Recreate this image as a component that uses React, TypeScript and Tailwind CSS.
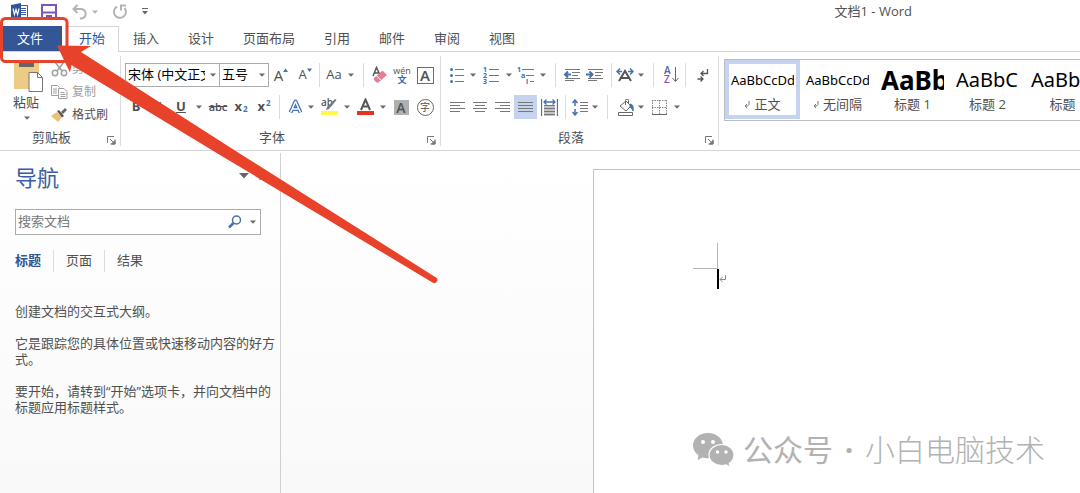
import type { ReactNode } from 'react';
import clsx from 'clsx';

const tabs = ['插入', '设计', '页面布局', '引用', '邮件', '审阅', '视图'];

const styles = [
  { name: '正文', sample: 'AaBbCcDd', size: 'text-[13px]', mark: true },
  { name: '无间隔', sample: 'AaBbCcDd', size: 'text-[13px]', mark: true },
  { name: '标题 1', sample: 'AaBb', size: 'text-[26px] font-bold' },
  { name: '标题 2', sample: 'AaBbC', size: 'text-[20px]' },
  { name: '标题', sample: 'AaBbC', size: 'text-[20px]' },
];

const Caret = () => (
  <svg width="6" height="4" viewBox="0 0 6 4" className="shrink-0">
    <path d="M0 0.5h6L3 3.8z" fill="#6a6a6a" />
  </svg>
);

type ToolProps = {
  label: string;
  className: string;
  children: ReactNode;
};

const Tool = ({ label, className, children }: ToolProps) => (
  <button
    type="button"
    aria-label={label}
    className={clsx('flex h-6 shrink-0 items-center justify-center', className)}
  >
    {children}
  </button>
);

const More = ({ label, wide }: { label: string; wide?: boolean }) => (
  <Tool label={label} className={wide ? 'w-4' : 'w-2'}>
    <Caret />
  </Tool>
);

const Divider = ({ className }: { className: string }) => (
  <div className={clsx('flex h-6 shrink-0 justify-center', className)}>
    <div className="w-px bg-[#dcdcdc]" />
  </div>
);

const Launcher = ({ label }: { label: string }) => (
  <button type="button" aria-label={label}>
    <svg width="9" height="9" viewBox="0 0 9 9" fill="none" stroke="#777">
      <path d="M0.5 7V0.5H7M3 3l4 4M8 3.5V8H3.5" />
      <path d="M8 4.5V8H4.5z" fill="#777" />
    </svg>
  </button>
);

type GroupProps = {
  title: string;
  className: string;
  children: ReactNode;
};

const Group = ({ title, className, children }: GroupProps) => (
  <section
    aria-label={title}
    className={clsx(
      'my-1 flex shrink-0 flex-col border-r border-[#dcdcdc]',
      className
    )}
  >
    <div className="h-[75px]">{children}</div>
    <div className="flex h-4 items-center pr-1">
      <span className="flex-1 pr-1 text-center">{title}</span>
      <div className="pt-1.5">
        <Launcher label={title} />
      </div>
    </div>
  </section>
);

const Lines = ({ rows }: { rows: [number, number][] }) => (
  <svg width="16" height="14" viewBox="0 0 16 14" stroke="#777">
    {rows.map(([from, to], i) => (
      <path key={i} d={`M${from} ${i * 3 + 2.5}H${to}`} />
    ))}
  </svg>
);

const Indent = ({ out }: { out?: boolean }) => (
  <svg width="18" height="14" viewBox="0 0 18 14" fill="none" stroke="#777">
    <path d="M2 1.5h15M9 4.5h8M9 7.5h6M2 10.5h15M2 12.5h9" />
    <path
      d={out ? 'M8 6.5H2M5 3.5l-3 3 3 3' : 'M0 6.5h6M3.5 3.5l3 3-3 3'}
      stroke="#4472b0"
      strokeWidth="2"
    />
  </svg>
);

const TitleBar = () => (
  <header className="flex h-[26px] items-center justify-between pr-[168px] pb-[3px]">
    <div className="flex items-center pl-[11px]">
      <svg width="17" height="17" viewBox="0 0 17 17" fill="none">
        <path d="M8 2.5h8.5v12H8" fill="#fff" stroke="#3b5ea0" />
        <path d="M10 5.5h5M10 7.5h5M10 9.5h5M10 11.5h5" stroke="#3b5ea0" />
        <path d="M0 2l10-2v17L0 15z" fill="#2f5597" />
        <path d="M2 5.5l1.4 6L5 6.5l1.6 5L8 5.5" stroke="#fff" strokeWidth="1.2" />
      </svg>
      <button type="button" aria-label="保存" className="ml-[13px]">
        <svg width="16" height="16" viewBox="0 0 16 16" fill="none">
          <path d="M1 1h14v14H1z" stroke="#7e57b5" strokeWidth="2" />
          <path d="M2 8.5h12" stroke="#7e57b5" strokeWidth="2" />
          <path d="M5 11h6v4H5z" fill="#7e57b5" />
        </svg>
      </button>
      <button type="button" aria-label="撤消" className="ml-[15px]">
        <svg width="16" height="16" viewBox="0 0 16 16" fill="none" stroke="#b4b4b4" strokeWidth="2">
          <path d="M5.500 1L1.500 5l4 4M2 5h7.500a4.800 4.800 0 010 9.500H8" />
        </svg>
      </button>
      <button type="button" aria-label="撤消列表" className="ml-1 opacity-50">
        <Caret />
      </button>
      <button type="button" aria-label="重复" className="ml-[14px]">
        <svg width="16" height="16" viewBox="0 0 16 16" fill="none" stroke="#b4b4b4" strokeWidth="2">
          <path d="M5 2.600A6 6 0 1012.500 4M9 6.500V1.500h5" />
        </svg>
      </button>
      <button type="button" aria-label="自定义快速访问工具栏" className="ml-[14px]">
        <svg width="6" height="7" viewBox="0 0 6 7">
          <path d="M0 0h6v1H0zM0 3h6L3 6.500z" fill="#666" />
        </svg>
      </button>
    </div>
    <h1>文档1 - Word</h1>
  </header>
);

const TabBar = () => (
  <nav className="flex h-[26px] items-stretch border-b border-[#d4d4d4]">
    <button type="button" className="ml-0.5 w-[60px] bg-[#345696] pr-1 text-white">
      文件
    </button>
    <button
      type="button"
      className="-mb-px ml-[5px] w-[52px] border border-b-0 border-[#d4d4d4] bg-white pr-0.5 pb-0.5 text-[#2f5597]"
    >
      开始
    </button>
    <div className="flex gap-px">
      {tabs.map((tab) => (
        <button key={tab} type="button" className="px-3.5">
          {tab}
        </button>
      ))}
    </div>
  </nav>
);

const ClipboardGroup = () => (
  <Group title="剪贴板" className="w-[121px]">
    <div className="flex pl-[11px]">
      <button type="button" className="flex w-8 flex-col items-center">
        <svg width="32" height="38" viewBox="0 0 32 38" fill="none">
          <path d="M3 5h25v28H3z" fill="#eccb85" />
          <path d="M8 4h15v7H8z" fill="#666" />
          <path d="M18 16.500h8.500l5 5V35.500H18z" fill="#fff" stroke="#777" />
          <path d="M26.500 16.500v5h5" stroke="#777" />
        </svg>
        <span className="pr-0.5 leading-4">粘贴</span>
        <span className="pt-1.5">
          <Caret />
        </span>
      </button>
      <div className="flex flex-col pt-px pl-2 text-xs">
        <button type="button" className="flex h-[23px] items-center gap-1 text-[#a0a0a0]">
          <svg width="17" height="16" viewBox="0 0 17 16" fill="none" stroke="#a0a0a0" strokeWidth="1.500">
            <path d="M4 1l7 9M13 1L6 10" />
            <circle cx="4" cy="12" r="2.700" />
            <circle cx="13" cy="12" r="2.700" />
          </svg>
          剪切
        </button>
        <button type="button" className="flex h-[23px] items-center gap-1 text-[#a0a0a0]">
          <svg width="17" height="16" viewBox="0 0 17 16" fill="#fff" stroke="#a0a0a0">
            <path d="M0.500 1.500h6l2 2v8h-8zM2 5h4M2 7h4M2 9h4" />
            <path d="M7.500 4.500h5.500l3 3v7H7.500zM9.500 8.500h4M9.500 10.500h5M9.500 12.500h5" />
          </svg>
          复制
        </button>
        <button type="button" className="flex h-[23px] items-center gap-1">
          <svg width="17" height="16" viewBox="0 0 17 16">
            <path d="M0 9l6-4 5 5-4 5z" fill="#e8c27c" />
            <path d="M6 4l2-1 5 6-2 1.500z" fill="#555" />
            <path d="M10 5l4-4 2 2-4 4z" fill="#666" />
          </svg>
          格式刷
        </button>
      </div>
    </div>
  </Group>
);

const Combo = ({ label, value, className }: { label: string; value: string; className: string }) => (
  <div className={clsx('relative h-6 shrink-0', className)}>
    <select
      aria-label={label}
      className="h-full w-full appearance-none border border-[#ababab] bg-white pr-3.5 pl-0.5 text-black"
    >
      <option>{value}</option>
    </select>
    <span className="pointer-events-none absolute inset-y-0 right-1 flex items-center">
      <Caret />
    </span>
  </div>
);

const FontGroup = () => (
  <Group title="字体" className="w-[320px]">
    <div className="flex pt-[7px] pl-1">
      <Combo label="字体" value="宋体 (中文正文)" className="w-[95px]" />
      <Combo label="字号" value="五号" className="-ml-px w-[50px]" />
      <Tool label="增大字号" className="w-6 text-[15px]">
        A
        <svg width="5" height="14" viewBox="0 0 5 14">
          <path d="M0 4h5L2.500 0.500z" fill="#4472b0" />
        </svg>
      </Tool>
      <Tool label="减小字号" className="w-6 text-[13px]">
        A
        <svg width="5" height="14" viewBox="0 0 5 14">
          <path d="M0 0.500h5L2.500 4z" fill="#4472b0" />
        </svg>
      </Tool>
      <Divider className="w-1" />
      <Tool label="更改大小写" className="w-[26px] text-[13px]">
        Aa
      </Tool>
      <More label="大小写选项" />
      <Divider className="w-4" />
      <Tool label="清除所有格式" className="w-[18px]">
        <svg width="16" height="18" viewBox="0 0 16 18">
          <path d="M1 10L4.500 1.500 8 9M2.500 7h4" fill="none" stroke="#555" strokeWidth="1.500" />
          <path d="M2 12l8.500-7.500L15 9l-8.500 7.500H4.500L2 14z" fill="#df8296" />
          <path d="M4.500 9.800l4.500 4.500" stroke="#fff" />
        </svg>
      </Tool>
      <Tool label="拼音指南" className="w-[26px] flex-col">
        <span className="text-[9px] leading-[9px]">wén</span>
        <span className="text-[9px] leading-[10px] font-bold text-[#2f66ad]">文</span>
      </Tool>
      <Tool label="字符边框" className="w-5">
        <span className="flex size-[17px] items-center justify-center border border-[#4472b0] text-[15px] font-semibold">
          A
        </span>
      </Tool>
    </div>
    <div className="flex pt-2 pl-1">
      <Tool label="加粗" className="w-[22px] font-bold">
        B
      </Tool>
      <Tool label="倾斜" className="w-6 font-semibold italic">
        I
      </Tool>
      <Tool label="下划线" className="w-5 font-bold underline">
        U
      </Tool>
      <More label="下划线样式" wide />
      <Tool label="删除线" className="w-[22px] text-[11px] font-semibold line-through">
        abc
      </Tool>
      <Tool label="下标" className="w-6 gap-px font-bold">
        x<sub className="text-[8px] text-[#3b73b9]">2</sub>
      </Tool>
      <Tool label="上标" className="w-[22px] gap-px font-bold">
        x<sup className="text-[8px] text-[#3b73b9]">2</sup>
      </Tool>
      <Divider className="w-2" />
      <Tool label="文本效果" className="w-6">
        <svg width="15" height="16" viewBox="0 0 15 16" fill="none" strokeLinejoin="round">
          <path d="M2.500 13.500L7.500 2.500l5 11M4.500 10h6" stroke="#4472b0" strokeWidth="4" />
          <path d="M2.500 13.500L7.500 2.500l5 11M4.500 10h6" stroke="#fff" strokeWidth="1.500" />
        </svg>
      </Tool>
      <More label="文本效果选项" />
      <Tool label="突出显示" className="w-7">
        <svg width="17" height="18" viewBox="0 0 17 18" className="overflow-visible">
          <text x="0" y="8" fontSize="10" fontWeight="600" fill="#555">
            ab
          </text>
          <path d="M15.500 2L8 11l-3 1 1-3 8-8z" fill="#777" />
          <path d="M0 13h17v4H0z" fill="#fdf84c" />
        </svg>
      </Tool>
      <More label="突出显示颜色" />
      <Tool label="字体颜色" className="w-7">
        <svg width="17" height="18" viewBox="0 0 17 18">
          <path d="M4 12L8.500 1.500 13 12M5.500 8.500h6" fill="none" stroke="#555" strokeWidth="2" />
          <path d="M0 13h17v4H0z" fill="#e6321f" />
        </svg>
      </Tool>
      <More label="字体颜色选项" />
      <Tool label="字符底纹" className="w-7">
        <span className="flex size-[15px] items-center justify-center bg-[#b0b0b0] text-[14px] font-semibold">
          A
        </span>
      </Tool>
      <Tool label="带圈字符" className="w-5">
        <span className="flex size-[17px] items-center justify-center rounded-full border border-[#666] text-[10px]">
          字
        </span>
      </Tool>
    </div>
  </Group>
);

const ParagraphGroup = () => (
  <Group title="段落" className="w-[278px]">
    <div className="flex pt-[7px] pl-1">
      <Tool label="项目符号" className="w-6">
        <svg width="16" height="16" viewBox="0 0 16 16">
          <path d="M6 2.500h9M6 8.500h9M6 14.500h9" stroke="#777" />
          <circle cx="2.500" cy="2.500" r="1.500" fill="#4472b0" />
          <circle cx="2.500" cy="8.500" r="1.500" fill="#4472b0" />
          <circle cx="2.500" cy="14.500" r="1.500" fill="#4472b0" />
        </svg>
      </Tool>
      <More label="项目符号库" />
      <Tool label="编号" className="w-7">
        <svg width="16" height="18" viewBox="0 0 16 18" className="overflow-visible">
          <path d="M6 3.500h10M6 9.500h10M6 15.500h10" stroke="#777" />
          <g fill="#3b6db0" fontSize="7" fontWeight="700">
            <text x="0" y="6">1</text>
            <text x="0" y="12">2</text>
            <text x="0" y="18">3</text>
          </g>
        </svg>
      </Tool>
      <More label="编号库" />
      <Tool label="多级列表" className="w-[26px]">
        <svg width="18" height="18" viewBox="0 0 18 18" className="overflow-visible">
          <path d="M5 3.500h12M9 9.500h8M13 15.500h4" stroke="#777" />
          <g fill="#3b6db0" fontSize="7" fontWeight="700">
            <text x="0" y="6">1</text>
            <text x="4" y="12">a</text>
            <text x="9" y="18">i</text>
          </g>
        </svg>
      </Tool>
      <More label="列表库" />
      <Divider className="w-4" />
      <Tool label="减少缩进量" className="w-[18px]">
        <Indent out />
      </Tool>
      <Tool label="增加缩进量" className="w-7">
        <Indent />
      </Tool>
      <Divider className="w-1" />
      <Tool label="中文版式" className="w-6">
        <svg width="18" height="16" viewBox="0 0 18 16" fill="none">
          <path d="M3 14L9 4l6 10M5.500 11h7" stroke="#555" strokeWidth="2" />
          <path d="M6 4.500H1M4 1.500l-3 3 3 3M12 4.500h5M14 1.500l3 3-3 3" stroke="#4472b0" strokeWidth="1.500" />
        </svg>
      </Tool>
      <More label="中文版式选项" />
      <Divider className="w-4" />
      <Tool label="排序" className="w-5">
        <svg width="15" height="18" viewBox="0 0 15 18" className="overflow-visible">
          <text x="0" y="8" fontSize="10" fontWeight="600" fill="#3b6db0">A</text>
          <text x="0" y="17" fontSize="10" fontWeight="600" fill="#8a4fb0">Z</text>
          <path d="M11.500 1v14M8.500 12l3 3.500 3-3.500" fill="none" stroke="#666" />
        </svg>
      </Tool>
      <Divider className="w-2" />
      <Tool label="显示编辑标记" className="w-7">
        <svg width="12" height="15" viewBox="0 0 12 15" fill="none" stroke="#555" strokeWidth="1.300">
          <path d="M10.500 1v4.500H4M6.500 3L4 5.500 6.500 8M0.500 11H6M3.500 8.500L6 11l-2.500 2.500" />
        </svg>
      </Tool>
    </div>
    <div className="flex pt-2 pl-1">
      <Tool label="左对齐" className="w-6">
        <Lines rows={[[1, 16], [1, 11], [1, 16], [1, 11]]} />
      </Tool>
      <Tool label="居中" className="w-[22px]">
        <Lines rows={[[1, 15], [3, 13], [1, 15], [3, 13]]} />
      </Tool>
      <Tool label="右对齐" className="w-[23px]">
        <Lines rows={[[0, 15], [5, 15], [0, 15], [5, 15]]} />
      </Tool>
      <Tool label="两端对齐" className="w-[23px] bg-[#c6d3ee]">
        <Lines rows={[[0, 15], [0, 15], [0, 15], [0, 15]]} />
      </Tool>
      <Tool label="分散对齐" className="w-6">
        <svg width="17" height="17" viewBox="0 0 17 17" fill="none">
          <path d="M3 6h11v11H3z" fill="#c4c4c4" />
          <path d="M3 6.500h11M3 9.500h11M3 12.500h11M3 15.500h11" stroke="#777" />
          <path d="M0.500 0v17M16.500 0v17M3 3h11M5.500 0.500L3 3l2.500 2.500M11.500 0.500L14 3l-2.500 2.500" stroke="#4472b0" strokeWidth="1.300" />
        </svg>
      </Tool>
      <Divider className="w-2" />
      <Tool label="行距" className="w-[22px]">
        <svg width="16" height="17" viewBox="0 0 16 17" fill="none">
          <path d="M8 3.500h8M8 6.500h8M8 9.500h8M8 12.500h8" stroke="#777" />
          <path d="M3 1v6M0.500 4L3 1l2.500 3M3 10v6M0.500 13L3 16l2.500-3" stroke="#4472b0" strokeWidth="1.500" />
        </svg>
      </Tool>
      <More label="行距选项" />
      <Divider className="w-4" />
      <Tool label="底纹" className="w-[22px]">
        <svg width="18" height="17" viewBox="0 0 18 17" fill="none" stroke="#666">
          <path d="M3 7l6-5 5 5-5 5zM8.500 6V1.500a1.500 1.500 0 013 0V4" />
          <path d="M13 5q4 0 3 7-1-3-3-4z" fill="#4472b0" stroke="#4472b0" />
          <path d="M1.500 13.500h14v3h-14z" />
        </svg>
      </Tool>
      <More label="底纹颜色" />
      <Tool label="边框" className="w-7">
        <svg width="15" height="15" viewBox="0 0 15 15" fill="none" stroke="#888">
          <path d="M0.500 0v14M7.500 0v14M14.500 0v14M0 0.500h15M0 7.500h15" strokeDasharray="1.500 1" />
          <path d="M0 14.500h15" stroke="#666" />
        </svg>
      </Tool>
      <More label="边框选项" />
    </div>
  </Group>
);

const StyleGallery = () => (
  <div className="mt-[7px] ml-[5px] flex h-[62px] min-w-0 flex-1 overflow-hidden border border-r-0 border-[#b9bdc2]">
    {styles.map((style, i) => (
      <button
        key={style.name}
        type="button"
        className={clsx(
          'flex h-[59px] w-[75px] shrink-0 flex-col items-center border-4 pt-[2px]',
          i === 0 ? 'border-[#c6d3ee]' : 'border-transparent'
        )}
      >
        <span
          className={clsx(
            "flex h-[28px] w-[63px] shrink-0 items-center overflow-hidden font-['Noto_Sans',sans-serif] leading-7 text-black",
            style.size
          )}
        >
          {style.sample}
        </span>
        <span className="flex items-center gap-1 leading-5 whitespace-nowrap">
          {style.mark && (
            <svg width="6" height="7" viewBox="0 0 6 7" fill="none" stroke="#777">
              <path d="M5 0v3.500L3.500 5H1M3 3L1 5l2 2" />
            </svg>
          )}
          {style.name}
        </span>
      </button>
    ))}
  </div>
);

const Navigation = () => (
  <aside className="mt-[2px] w-[281px] shrink-0 border-r border-[#d0d0d0] pr-1 pl-[15px]">
    <div className="flex items-start justify-between pt-2 pr-[9px]">
      <h2 className="text-[22px] leading-8 text-[#3a5da3]">导航</h2>
      <div className="flex items-center gap-2.5 pt-[11px]">
        <button type="button" aria-label="任务窗格选项">
          <svg width="10" height="6" viewBox="0 0 10 6">
            <path d="M0 0h10L5 5.500z" fill="#666" />
          </svg>
        </button>
        <button type="button" aria-label="关闭">
          <svg width="8" height="8" viewBox="0 0 8 8" stroke="#666" strokeWidth="1.500">
            <path d="M0.500 0.500l7 7M7.500 0.500l-7 7" />
          </svg>
        </button>
      </div>
    </div>
    <div className="mt-4 mr-[15px] flex h-[26px] items-center border border-[#ababab] bg-white pr-1">
      <input
        type="text"
        aria-label="搜索文档"
        placeholder="搜索文档"
        className="min-w-0 flex-1 pl-0.5 outline-none placeholder:text-[#777]"
      />
      <button type="button" aria-label="搜索">
        <svg width="14" height="14" viewBox="0 0 14 14" fill="none" stroke="#4472b0">
          <circle cx="8.500" cy="5" r="4" strokeWidth="1.500" />
          <path d="M5.500 8L1 12.500" strokeWidth="2.500" />
        </svg>
      </button>
      <button type="button" aria-label="搜索选项" className="pl-2">
        <Caret />
      </button>
    </div>
    <div className="mt-[15px] flex h-[22px] items-center">
      <button type="button" className="pr-3 font-bold text-[#2f5597]">
        标题
      </button>
      <button type="button" className="h-full border-x border-[#dcdcdc] px-3">
        页面
      </button>
      <button type="button" className="px-3">
        结果
      </button>
    </div>
    <div className="mt-[31px] space-y-4 leading-4">
      <p>创建文档的交互式大纲。</p>
      <p>它是跟踪您的具体位置或快速移动内容的好方式。</p>
      <p>要开始，请转到“开始”选项卡，并向文档中的标题应用标题样式。</p>
    </div>
  </aside>
);

const Page = () => (
  <main className="mt-[18px] ml-[312px] flex-1 border-t border-l border-[#c3c3c3] bg-white pt-[73px] pl-[99px]">
    <div className="h-[26px] w-[25px] border-r border-b border-[#b5b5b5]" />
    <div className="flex items-center pl-6">
      <div className="h-5 w-0.5 bg-black" />
      <svg width="7" height="8" viewBox="0 0 7 8" fill="none" stroke="#888">
        <path d="M6.500 0v4.500H1M3.500 2L1 4.500 3.500 7" />
      </svg>
    </div>
  </main>
);

const Watermark = () => (
  <div className="absolute right-[35px] bottom-[21px] flex items-center text-[30px] leading-[44px] text-[#b2b2b2]">
    <svg width="42" height="35" viewBox="0 0 42 35" fill="#b2b2b2">
      <path d="M15 0C6.500 0 0 5.500 0 12.500c0 4 2 7.300 5.500 9.700L4.500 27l5-2.600c1.800.5 3.600.8 5.500.8 8.500 0 15-5.500 15-12.500S23.500 0 15 0z" />
      <path
        d="M28.500 11.500C21.500 11.500 16 16 16 22s5.500 10.500 12.500 10.500c1.600 0 3.100-.2 4.500-.7l4.300 2.400-1-3.800C39.300 28.400 41 25.500 41 22c0-6-5.500-10.500-12.500-10.500z"
        stroke="#fff"
        strokeWidth="1.200"
      />
      <g fill="#fff">
        <circle cx="10" cy="9" r="2" />
        <circle cx="20" cy="9" r="2" />
        <circle cx="24.500" cy="19" r="1.700" />
        <circle cx="33" cy="19" r="1.700" />
      </g>
    </svg>
    <span className="pl-2">公众号</span>
    <span className="w-8 text-center font-bold">·</span>
    <span className="font-light">小白电脑技术</span>
  </div>
);

// highlight frame round the file tab and the arrow pointing at it
const Callout = () => (
  <svg
    width="440"
    height="290"
    viewBox="0 0 440 290"
    className="pointer-events-none absolute top-0 left-0"
    fill="#e9422a"
  >
    <rect x="1.500" y="18.500" width="65.500" height="43" rx="4" fill="none" stroke="#e9422a" strokeWidth="3" />
    <path d="M57 45.500L91 46l-10 6L242 155l194 122.500a3 3 0 01-3.500 5L220 155 71.500 65 70 72.500z" />
  </svg>
);

const App = () => {
  return (
    <div className="relative flex min-h-screen flex-col overflow-hidden bg-white font-['Open_Sans','Noto_Sans_CJK_SC',sans-serif] text-[13px] text-[#505050]">
      <TitleBar />
      <TabBar />
      <div className="flex h-[99px] border-b border-[#d4d4d4]">
        <ClipboardGroup />
        <FontGroup />
        <ParagraphGroup />
        <StyleGallery />
      </div>
      <div className="flex flex-1 bg-linear-to-b from-white to-[#f9f9f9]">
        <Navigation />
        <Page />
      </div>
      <Watermark />
      <Callout />
    </div>
  );
};

export default App;
